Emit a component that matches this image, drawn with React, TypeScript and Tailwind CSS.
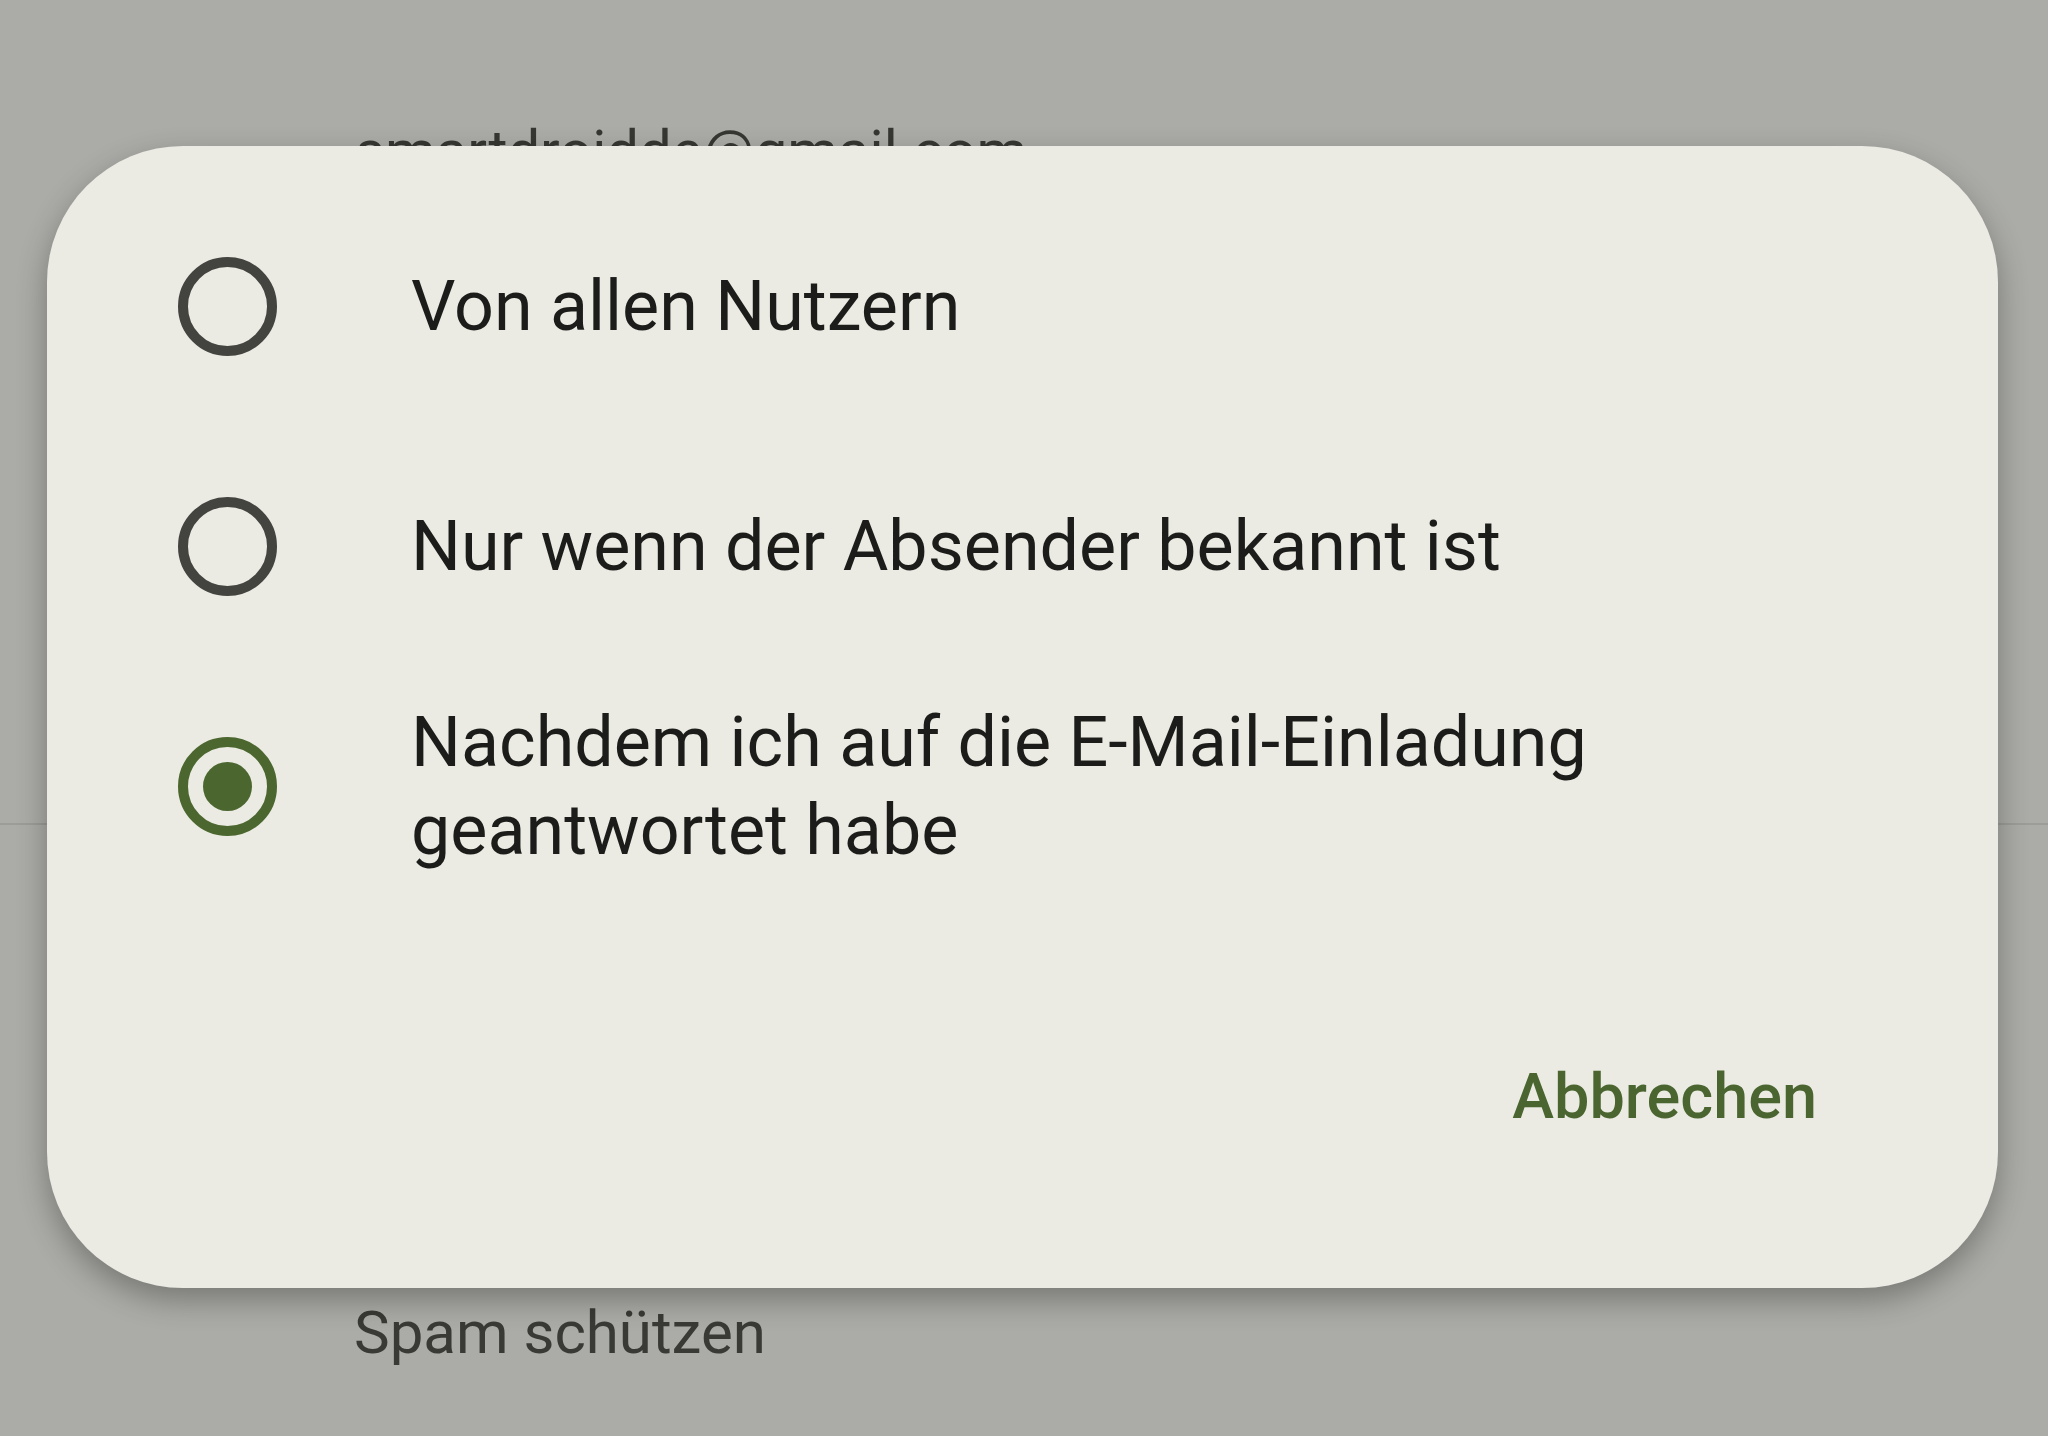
const options = [
  { label: "Von allen Nutzern", checked: false },
  { label: "Nur wenn der Absender bekannt ist", checked: false },
  { label: "Nachdem ich auf die E-Mail-Einladung geantwortet habe", checked: true },
];

function Radio({ checked }: { checked: boolean }) {
  return (
    <div
      className={
        checked
          ? "flex h-[99px] w-[99px] shrink-0 items-center justify-center rounded-full border-[10px] border-[#4b672f]"
          : "flex h-[99px] w-[99px] shrink-0 items-center justify-center rounded-full border-[10px] border-[#43443f]"
      }
    >
      {checked && <div className="h-[49px] w-[49px] rounded-full bg-[#4b672f]" />}
    </div>
  );
}

export default function App() {
  return (
    <div className="relative h-[1436px] w-[2048px] overflow-hidden bg-[#abaca7] font-['Roboto',sans-serif]">
      {/* page behind the scrim */}
      <div className="flex flex-col">
        <div className="pl-[355px] pt-[115px] text-[58px] leading-[72px] text-[#363733]">
          smartdroidde@gmail.com
        </div>
        <div className="mt-[636px] h-[2px] w-full bg-[#9c9d98]" />
        <div className="mt-[472px] pl-[354px] text-[60px] leading-[72px] text-[#393a35]">
          Spam schützen
        </div>
      </div>

      {/* dialog */}
      <div className="absolute left-[47px] top-[146px] flex h-[1142px] w-[1951px] flex-col rounded-[136px] bg-[#ebebe3] pt-[40px] shadow-[0_12px_30px_rgba(0,0,0,0.3)]">
        {options.map((o) => (
          <div key={o.label} className="flex h-[240px] items-center pl-[131px]">
            <Radio checked={o.checked} />
            <div className="ml-[134px] max-w-[1260px] text-[70px] leading-[88px] text-[#1c1d1a]">
              {o.label}
            </div>
          </div>
        ))}
        <div className="mt-[155px] flex justify-end pr-[181px]">
          <span className="text-[63px] font-medium leading-[72px] text-[#4a6530]">Abbrechen</span>
        </div>
      </div>
    </div>
  );
}
